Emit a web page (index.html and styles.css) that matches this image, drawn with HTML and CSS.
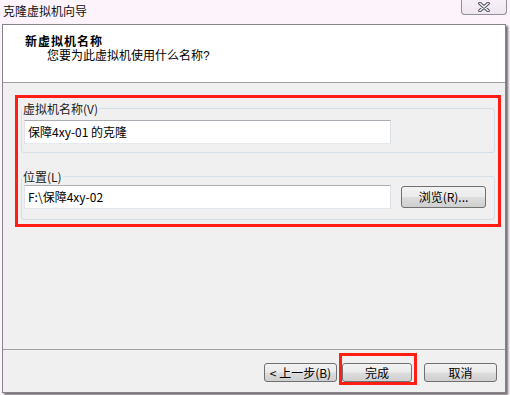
FILE: index.html
```html
<!DOCTYPE html>
<html lang="zh-CN">
<head>
<meta charset="utf-8">
<title>克隆虚拟机向导</title>
<link rel="stylesheet" href="styles.css">
</head>
<body>
<div class="titlebar">
  <span class="title">克隆虚拟机向导</span>
  <span class="close">
    <svg width="12" height="10" viewBox="0 0 12 10">
      <path d="M2 1.5 L10 8.5 M10 1.5 L2 8.5" stroke="#4f5160" stroke-width="3.6" stroke-linecap="round" fill="none"/>
      <path d="M2 1.5 L10 8.5 M10 1.5 L2 8.5" stroke="#f4f4f8" stroke-width="1.6" stroke-linecap="round" fill="none"/>
    </svg>
  </span>
</div>
<div class="window">
  <div class="header">
    <div class="h-title">新虚拟机名称</div>
    <div class="h-sub">您要为此虚拟机使用什么名称?</div>
  </div>
  <div class="main">
    <div class="highlight">
      <fieldset class="group g1">
        <legend>虚拟机名称(V)</legend>
        <div class="field">保障4xy-01 的克隆</div>
      </fieldset>
      <fieldset class="group g2">
        <legend>位置(L)</legend>
        <div class="row">
          <div class="field">F:\保障4xy-02</div>
          <button class="btn browse">浏览(R)...</button>
        </div>
      </fieldset>
    </div>
  </div>
  <div class="footer">
    <button class="btn back">&lt; 上一步(B)</button>
    <button class="btn finish">完成</button>
    <button class="btn cancel">取消</button>
  </div>
</div>
</body>
</html>
```
FILE: styles.css
```css
html, body {
  margin: 0;
  padding: 0;
}
body {
  width: 510px;
  height: 395px;
  overflow: hidden;
  background: #fcf3fb;
  font-family: "Noto Sans CJK SC", "Microsoft YaHei", sans-serif;
  font-size: 12px;
  color: #000;
}
.titlebar {
  height: 24px;
  display: flex;
  justify-content: space-between;
  align-items: flex-start;
}
.title {
  padding-left: 3px;
  line-height: 21px;
  font-size: 12px;
  color: #111;
}
.close {
  width: 46px;
  height: 15px;
  box-sizing: border-box;
  margin-right: 3px;
  border: 1px solid #8e8f9a;
  border-top: none;
  border-radius: 0 0 4px 4px;
  display: flex;
  justify-content: center;
  align-items: center;
  background: linear-gradient(#f8f0f8, #efe6ef);
}
.close svg {
  display: block;
}
.window {
  margin-left: 2px;
  width: 504px;
  height: 369px;
  box-sizing: border-box;
  border: 1px solid #85848c;
  background: #f0f0f0;
  display: flex;
  flex-direction: column;
  box-shadow: 2px 2px 2px rgba(0, 0, 0, 0.55);
}
.header {
  height: 58px;
  box-sizing: border-box;
  background: #fff;
  border-bottom: 1px solid #a0a0a0;
  padding: 11px 0 0 22px;
  font-family: "Liberation Sans", "Noto Sans CJK SC", sans-serif;
}
.h-title {
  font-weight: bold;
  line-height: 13px;
  letter-spacing: 1px;
}
.h-sub {
  margin-left: 22px;
  line-height: 14px;
}
.main {
  flex: 1;
  padding: 12px 0 0 12px;
}
.highlight {
  width: 486px;
  box-sizing: border-box;
  border: 3px solid #ff1d14;
  padding: 3px 3px 4px;
}
.group {
  margin: 0;
  min-width: 0;
  padding: 4px 8px 8px 2px;
  border: 1px solid #d5dfe5;
  border-radius: 3px;
}
.group legend {
  padding: 0 1px;
  margin-left: -2px;
  line-height: 15px;
  color: #1a1a1a;
}
.g2 {
  margin-top: 16px;
  padding-top: 1px;
  padding-bottom: 10px;
}
.row {
  display: flex;
  align-items: center;
  gap: 10px;
}
.field {
  width: 367px;
  height: 24px;
  box-sizing: border-box;
  border: 1px solid;
  border-color: #abadb3 #dbdfe6 #e3e9ef #e2e3ea;
  background: #fff;
  padding-left: 3px;
  line-height: 22px;
  white-space: pre;
}
.btn {
  font: inherit;
  color: #000;
  padding: 0;
  box-sizing: border-box;
  border: 1px solid #707070;
  border-radius: 3px;
  background: linear-gradient(#f2f2f2 0%, #ebebeb 48%, #dddddd 52%, #cfcfcf 100%);
  cursor: default;
}
.browse {
  width: 85px;
  height: 22px;
  line-height: 20px;
}
.footer {
  height: 43px;
  box-sizing: border-box;
  border-top: 1px solid #a0a0a0;
  display: flex;
  justify-content: flex-end;
  align-items: flex-start;
  padding: 13px 8px 0 0;
}
.footer .btn {
  height: 19px;
  line-height: 17px;
}
.back {
  width: 73px;
}
.finish {
  width: 70px;
  margin-left: 5px;
  position: relative;
}
.finish::after {
  content: "";
  position: absolute;
  left: -4px;
  right: -6px;
  top: -11px;
  bottom: -4px;
  border: 3px solid #ff1d14;
}
.cancel {
  width: 73px;
  margin-left: 12px;
}
```
